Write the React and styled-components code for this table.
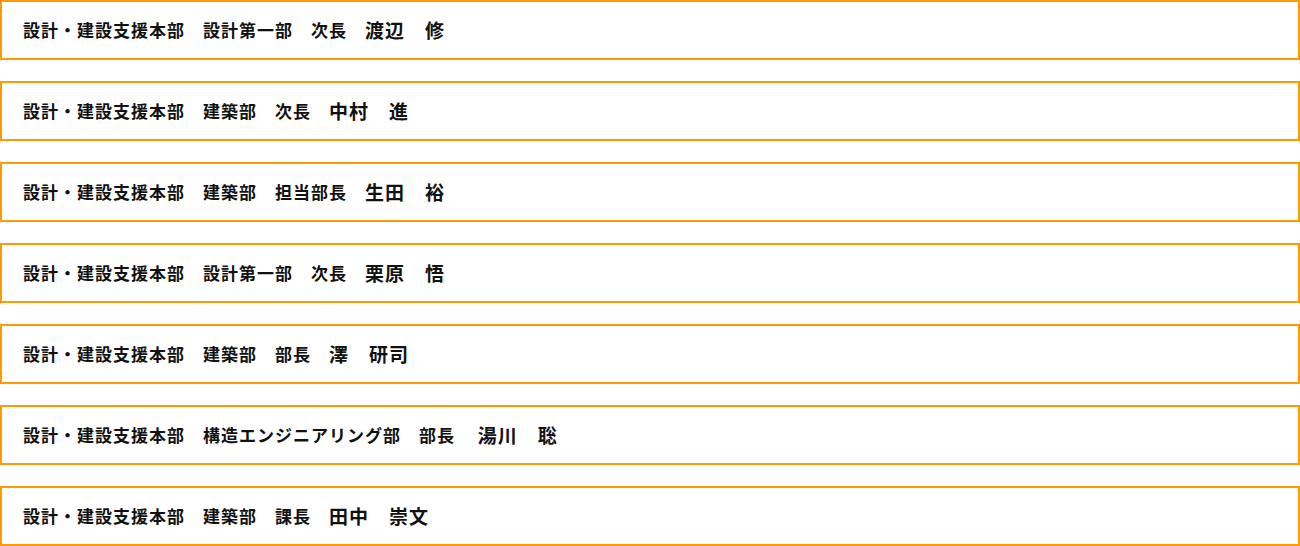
import React from "react";
import styled, { createGlobalStyle } from "styled-components";

const Global = createGlobalStyle`
  html, body { margin: 0; padding: 0; background: #fff; }
  body { font-family: "Noto Sans CJK JP", "Noto Sans", sans-serif; color: #111; }
`;

const List = styled.ul`
  list-style: none;
  margin: 0;
  padding: 0;
  display: flex;
  flex-direction: column;
  gap: 21px;
  width: 1300px;
`;

const Card = styled.li`
  box-sizing: border-box;
  height: 60px;
  border: 2px solid #ff9a00;
  display: flex;
  align-items: center;
  padding: 0 0 2px 21px;
  white-space: pre;
  font-kerning: none;
  font-feature-settings: "kern" 0, "palt" 0;
`;

const Dept = styled.span`
  font-size: 17px;
  font-weight: 700;
  letter-spacing: 1px;
  line-height: 1;
`;

const Name = styled.span`
  font-size: 19px;
  font-weight: 700;
  letter-spacing: 1px;
  line-height: 1;
`;

const people = [
  ["設計・建設支援本部　設計第一部　次長　", "渡辺　修"],
  ["設計・建設支援本部　建築部　次長　", "中村　進"],
  ["設計・建設支援本部　建築部　担当部長　", "生田　裕"],
  ["設計・建設支援本部　設計第一部　次長　", "栗原　悟"],
  ["設計・建設支援本部　建築部　部長　", "澤　研司"],
  ["設計・建設支援本部　構造エンジニアリング部　部長　 ", "湯川　聡"],
  ["設計・建設支援本部　建築部　課長　", "田中　崇文"],
];

export default function App() {
  return (
    <>
      <Global />
      <List>
        {people.map(([d, n], i) => (
          <Card key={i}>
            <Dept>{d}</Dept>
            <Name>{n}</Name>
          </Card>
        ))}
      </List>
    </>
  );
}
